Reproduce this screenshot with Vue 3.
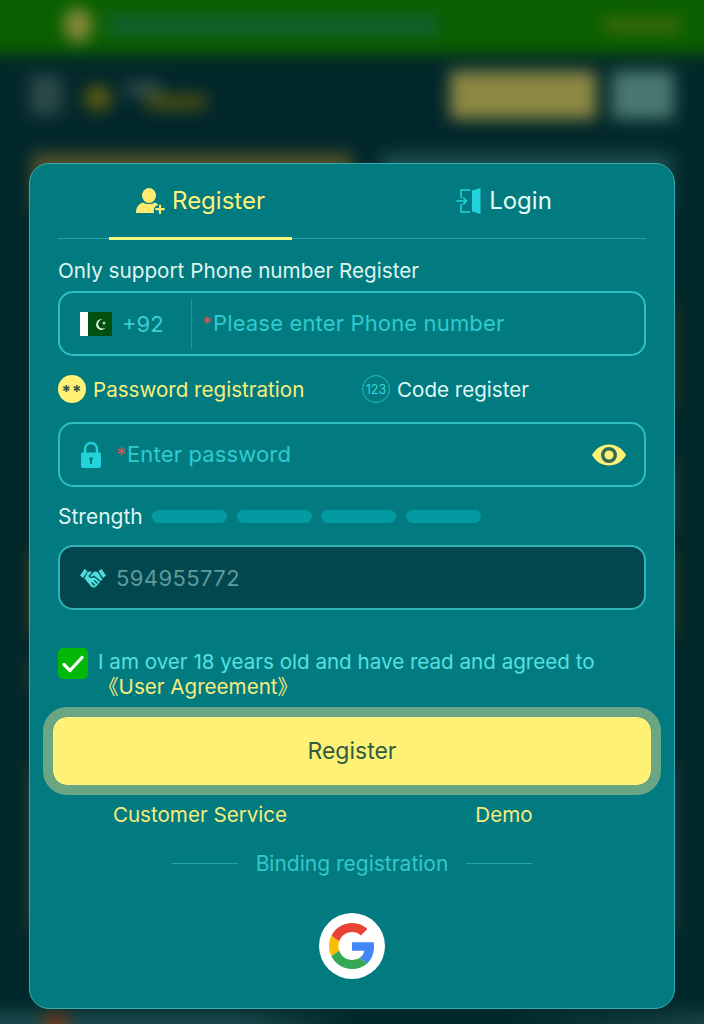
<script setup>
const bars = [1, 2, 3, 4]
const glowRows = [
  { id: 1, gap: 96, height: 101, left: 'transparent', right: '#3c3e18' },
  { id: 2, gap: 55, height: 68, left: 'transparent', right: '#304046' },
  { id: 3, gap: 22, height: 84, left: '#453f22', right: '#3d4218' },
  { id: 4, gap: 24, height: 30, left: '#2c3e36', right: 'transparent' },
  { id: 5, gap: 75, height: 165, left: '#343f30', right: '#264449' }
]
</script>

<template>
  <div class="page">
    <div class="backdrop">
      <div class="promo">
        <span class="promo-coin"></span>
        <span class="promo-text"></span>
        <span class="promo-action"></span>
      </div>
      <div class="head">
        <span class="menu"></span>
        <span class="logo-a"></span>
        <span class="logo-c"></span>
        <span class="logo-b"></span>
        <span class="head-gap"></span>
        <span class="head-btn"></span>
        <span class="head-alt"></span>
      </div>
      <div class="cards">
        <span class="card-a"></span>
        <span class="card-b"></span>
      </div>
      <div
        v-for="row in glowRows"
        :key="row.id"
        class="glow-row"
        :style="{ marginTop: row.gap + 'px', height: row.height + 'px' }"
      >
        <span :style="{ background: row.left }"></span>
        <span :style="{ background: row.right }"></span>
      </div>
      <div class="footer-strip">
        <span class="footer-mark"></span>
      </div>
    </div>

    <section class="modal">
      <div class="tabs">
        <div class="tab tab-active">
          <svg class="tab-icon" width="30" height="26" viewBox="0 0 30 26">
            <ellipse cx="14" cy="7.500" rx="7" ry="7.500" fill="#ffec6e" />
            <path d="M1 25c0-6 3-9.500 7-10.500 3.500 2 8.500 2 12 0 1.500.6 2.500 1.500 3.200 2.500a6 6 0 0 0-4.200 8z" fill="#ffec6e" />
            <path d="M25 17.500v7.500M21.200 21.200h7.600" stroke="#ffec6e" stroke-width="2.200" stroke-linecap="round" fill="none" />
          </svg>
          <span>Register</span>
        </div>
        <div class="tab tab-idle">
          <svg class="tab-icon" width="26" height="28" viewBox="0 0 26 28">
            <path d="M14 3H5v8M5 17v8h9" stroke="#22d3dc" stroke-width="1.600" fill="none" />
            <path d="M0.500 14H10M7 10.500l3.500 3.500L7 17.500" stroke="#22d3dc" stroke-width="1.600" fill="none" />
            <path d="M16 3.500 24.500 1v26L16 24.500z" fill="#22d3dc" />
          </svg>
          <span>Login</span>
        </div>
      </div>

      <p class="hint">Only support Phone number Register</p>

      <div class="field field-phone">
        <div class="prefix">
          <svg width="32" height="24" viewBox="0 0 32 24">
            <rect width="32" height="24" fill="#01500f" />
            <rect width="8" height="24" fill="#fff" />
            <path d="M22.500 7.500a5.200 5.200 0 1 0 3.500 7.500 4.500 4.500 0 1 1-3.500-7.500z" fill="#e8f5e0" />
            <path d="m24 9 .5 1.400 1.400.1-1.100.9.4 1.400-1.200-.8-1.200.8.400-1.400-1.100-.9 1.400-.1z" fill="#e8f5e0" />
          </svg>
          <span class="code">+92</span>
        </div>
        <span class="placeholder"><i>*</i>Please enter Phone number</span>
      </div>

      <div class="modes">
        <div class="mode mode-active">
          <span class="badge badge-stars">**</span>
          <span>Password registration</span>
        </div>
        <div class="mode mode-idle">
          <span class="badge badge-code">123</span>
          <span>Code register</span>
        </div>
      </div>

      <div class="field field-password">
        <svg class="lock" width="22" height="28" viewBox="0 0 22 28">
          <path d="M5 13V8a6 6 0 0 1 12 0v5" stroke="#22d3dc" stroke-width="2.400" fill="none" />
          <path fill-rule="evenodd" d="M2.500 11.500h17a1.500 1.500 0 0 1 1.500 1.500v12a2 2 0 0 1-2 2H3a2 2 0 0 1-2-2V13a1.500 1.500 0 0 1 1.500-1.500zM11 16a2 2 0 0 0-1 3.700V23h2v-3.300A2 2 0 0 0 11 16z" fill="#22d3dc" />
        </svg>
        <span class="placeholder"><i>*</i>Enter password</span>
        <svg class="eye" width="36" height="24" viewBox="0 0 36 24">
          <path d="M1 12C5 5 11 1.500 18 1.500S31 5 35 12c-4 7-10 10.500-17 10.500S5 19 1 12z" fill="#fff176" />
          <circle cx="18" cy="12" r="6.300" fill="none" stroke="#2f6a55" stroke-width="3.400" />
        </svg>
      </div>

      <div class="strength">
        <span class="strength-label">Strength</span>
        <span v-for="bar in bars" :key="bar" class="bar"></span>
      </div>

      <div class="field field-invite">
        <svg width="28" height="22" viewBox="0 0 28 22">
          <path d="M1 8.500 5.500 2 8.500 4 4 11z" fill="#4fdde0" />
          <path d="M27 8.500 22.500 2 19.500 4 24 11z" fill="#4fdde0" />
          <path d="M5.500 11.500 12 19.300c1.500 1.700 4 1.700 5.200.2L23.300 12.500 19 5.500c-2-1.300-4-1.300-5.500-.3-1.500-1-3.500-1-5 0z" fill="#4fdde0" />
          <path d="M14 5 10 9c1 2 3 1.800 5 .2L21.500 14.500M13 16l2.500 2.200M15.500 13.800l2.500 2.200" stroke="#03484f" stroke-width="1.200" fill="none" stroke-linecap="round" />
        </svg>
        <span class="invite-code">594955772</span>
      </div>

      <div class="agree">
        <span class="check">
          <svg width="22" height="18" viewBox="0 0 22 18">
            <path d="M2 9.500 8 15.500 20 2.500" stroke="#fff" stroke-width="3.200" fill="none" stroke-linecap="round" stroke-linejoin="round" />
          </svg>
        </span>
        <div class="agree-text">
          <div>I am over 18 years old and have read and agreed to</div>
          <div class="agreement">《User Agreement》</div>
        </div>
      </div>

      <button class="submit" type="button">Register</button>

      <div class="links">
        <span>Customer Service</span>
        <span>Demo</span>
      </div>

      <div class="binding">
        <span class="rule"></span>
        <span>Binding registration</span>
        <span class="rule"></span>
      </div>

      <div class="google">
        <svg width="46" height="46" viewBox="0 0 48 48">
          <path fill="#EA4335" d="M24 9.500c3.540 0 6.710 1.220 9.210 3.600l6.850-6.850C35.900 2.380 30.470 0 24 0 14.620 0 6.510 5.380 2.560 13.220l7.980 6.190C12.430 13.720 17.740 9.500 24 9.500z" />
          <path fill="#4285F4" d="M46.980 24.550c0-1.570-.15-3.090-.38-4.550H24v9.020h12.940c-.58 2.960-2.260 5.480-4.780 7.180l7.730 6c4.510-4.180 7.090-10.360 7.090-17.650z" />
          <path fill="#FBBC05" d="M10.530 28.590c-.48-1.450-.76-2.990-.76-4.590s.27-3.140.76-4.590l-7.980-6.190C.92 16.460 0 20.120 0 24c0 3.880.92 7.540 2.560 10.780l7.970-6.190z" />
          <path fill="#34A853" d="M24 48c6.480 0 11.930-2.130 15.890-5.810l-7.730-6c-2.150 1.450-4.920 2.300-8.160 2.300-6.260 0-11.570-4.220-13.470-9.910l-7.980 6.190C6.510 42.620 14.620 48 24 48z" />
        </svg>
      </div>
    </section>
  </div>
</template>

<style>
html, body { background: #03282b; }
</style>

<style scoped>
* { box-sizing: border-box; }

.page {
  position: relative;
  width: 704px;
  height: 1024px;
  overflow: hidden;
  background: #03282b;
  font-family: Inter, "Noto Sans CJK SC", "Liberation Sans", sans-serif;
}

/* Blurred page behind the dialog */
.backdrop {
  display: flex;
  flex-direction: column;
  height: 100%;
  filter: blur(8px);
}
.promo {
  display: flex;
  align-items: center;
  height: 84px;
  margin: -30px -30px 0;
  padding: 26px 54px 0 94px;
  background: #0a5f00;
  flex: none;
}
.promo-coin { width: 28px; height: 34px; border-radius: 50%; background: #8d8a3c; }
.promo-text { width: 330px; height: 18px; margin-left: 16px; background: #165f38; }
.promo-action { width: 76px; height: 16px; margin-left: auto; background: #3d6a08; }
.head {
  display: flex;
  align-items: center;
  height: 66px;
  margin-top: 8px;
  padding: 0 30px;
  flex: none;
}
.menu { width: 32px; height: 40px; background: #2c4a4a; }
.logo-a { width: 28px; height: 26px; margin: 6px 0 0 22px; border-radius: 50%; background: #5b5a10; }
.logo-c { width: 34px; height: 12px; margin: -12px 0 0 14px; background: #3a5350; }
.logo-b { width: 60px; height: 14px; margin: 14px 0 0 -14px; background: #4f5210; }
.head-gap { flex: 1; }
.head-btn { width: 146px; height: 48px; background: #8d8843; }
.head-alt { width: 62px; height: 48px; margin-left: 16px; background: #4a7870; }
.cards {
  display: flex;
  gap: 30px;
  padding: 0 32px;
  margin-top: 26px;
  height: 56px;
  flex: none;
}
.card-a { width: 320px; background: #55542a; }
.card-b { flex: 1; background: #1c4f50; }
.glow-row {
  display: flex;
  justify-content: space-between;
  padding: 0 30px;
  flex: none;
}
.glow-row span { width: 40px; }
.footer-strip {
  height: 50px;
  margin: 82px -30px 0;
  padding-left: 74px;
  background: linear-gradient(90deg, #1a4a4c 0 35%, #03282b 50% 70%, #1a4648 100%);
  flex: none;
}
.footer-mark { display: block; width: 24px; height: 30px; background: #6e3a1e; }

/* Dialog */
.modal {
  position: absolute;
  left: 29px;
  top: 163px;
  width: 646px;
  height: 846px;
  padding: 0 28px;
  background: #017b80;
  border: 1px solid #3aabad;
  border-radius: 20px;
  display: flex;
  flex-direction: column;
}

.tabs {
  display: grid;
  grid-template-columns: 304px 304px;
  margin: 0 -10px;
  height: 75px;
  position: relative;
  flex: none;
}
.tabs::after {
  content: "";
  position: absolute;
  left: 10px;
  right: 10px;
  bottom: 0;
  height: 1px;
  background: #2aa3a6;
}
.tab {
  position: relative;
  display: flex;
  align-items: center;
  justify-content: center;
  gap: 7px;
  font-size: 24px;
  padding-bottom: 2px;
}
.tab-active { color: #fdf27b; }
.tab-active::after {
  content: "";
  position: absolute;
  left: 61px;
  width: 183px;
  bottom: -1px;
  height: 3px;
  background: #f4f77c;
  z-index: 1;
}
.tab-idle { color: #e4fbf8; }

.hint {
  margin: 20px 0 0;
  font-size: 20.700px;
  line-height: 24px;
  color: #dff5f0;
  flex: none;
}

.field {
  display: flex;
  align-items: center;
  border: 2px solid #2fbec3;
  border-radius: 15px;
  flex: none;
}
.field-phone { height: 65px; margin-top: 8px; }
.prefix {
  display: flex;
  align-items: center;
  gap: 10px;
  width: 132px;
  height: 50px;
  padding-left: 20px;
  border-right: 1px solid #1d9398;
  margin-right: 10px;
}
.code { font-size: 22px; color: #3dcfd2; }
.placeholder {
  padding-bottom: 2px;
  font-size: 22px;
  color: #2fcbcf;
  letter-spacing: 0.150px;
}
.placeholder i {
  display: inline-block;
  width: 11px;
  font-style: normal;
  font-size: 20px;
  color: #d9534f;
}

.modes {
  display: grid;
  grid-template-columns: 304px 1fr;
  align-items: center;
  height: 26px;
  margin-top: 19px;
  font-size: 20.600px;
  flex: none;
}
.mode { display: flex; align-items: center; gap: 7px; }
.mode-active { color: #f8ee7a; }
.mode-idle { color: #dff8f4; }
.badge {
  width: 28px;
  height: 28px;
  border-radius: 50%;
  display: flex;
  align-items: center;
  justify-content: center;
  flex: none;
}
.badge-stars {
  background: #fff176;
  color: #38544a;
  font-size: 17px;
  font-weight: 700;
  line-height: 1;
  padding-top: 6px;
  letter-spacing: 1px;
}
.badge-code {
  border: 1px solid #24bcc2;
  color: #3ad6da;
  font-size: 12.500px;
}

.field-password {
  height: 65px;
  margin-top: 21px;
  padding: 0 17px 0 20px;
  gap: 14px;
}
.eye { margin-left: auto; }

.strength {
  display: flex;
  align-items: center;
  height: 26px;
  margin-top: 16px;
  flex: none;
}
.strength-label { font-size: 21px; color: #dff5f0; width: 94px; }
.bar {
  width: 75px;
  height: 13px;
  margin-right: 9.500px;
  border-radius: 6.500px;
  background: #039aa1;
}

.field.field-invite {
  height: 65px;
  margin-top: 16px;
  padding-left: 19px;
  gap: 9px;
  background: #03474e;
  border-color: #30b4b9;
}
.invite-code { font-size: 22px; color: #5f9a9c; letter-spacing: 0.400px; }

.agree {
  display: flex;
  margin-top: 38px;
  gap: 10px;
  font-size: 20.600px;
  line-height: 25px;
  color: #56e0e0;
  flex: none;
}
.check {
  width: 30px;
  height: 31px;
  border-radius: 5px;
  background: #04b80a;
  display: flex;
  align-items: center;
  justify-content: center;
  flex: none;
}
.agree-text { margin-top: 1px; white-space: nowrap; }
.agreement { color: #f5ec7e; }

.submit {
  display: block;
  width: 618px;
  height: 88px;
  margin: 8px -15px 0;
  padding: 0;
  border: 10px solid #6aa683;
  border-radius: 24px;
  background: #fff176;
  background-clip: padding-box;
  color: #2e5c44;
  font: inherit;
  font-size: 23px;
  flex: none;
}

.links {
  display: grid;
  grid-template-columns: 304px 304px;
  margin: 8px -10px 0;
  height: 24px;
  line-height: 24px;
  font-size: 20.600px;
  color: #f5ec7e;
  text-align: center;
  flex: none;
}

.binding {
  display: flex;
  align-items: center;
  justify-content: center;
  gap: 18px;
  height: 26px;
  margin-top: 23px;
  font-size: 21px;
  color: #33c8cb;
  flex: none;
}
.rule { width: 66px; height: 1px; background: #24a4a8; }

.google {
  width: 66px;
  height: 66px;
  margin: 37px auto 0;
  border-radius: 50%;
  background: #fff;
  display: flex;
  align-items: center;
  justify-content: center;
  flex: none;
}
</style>
